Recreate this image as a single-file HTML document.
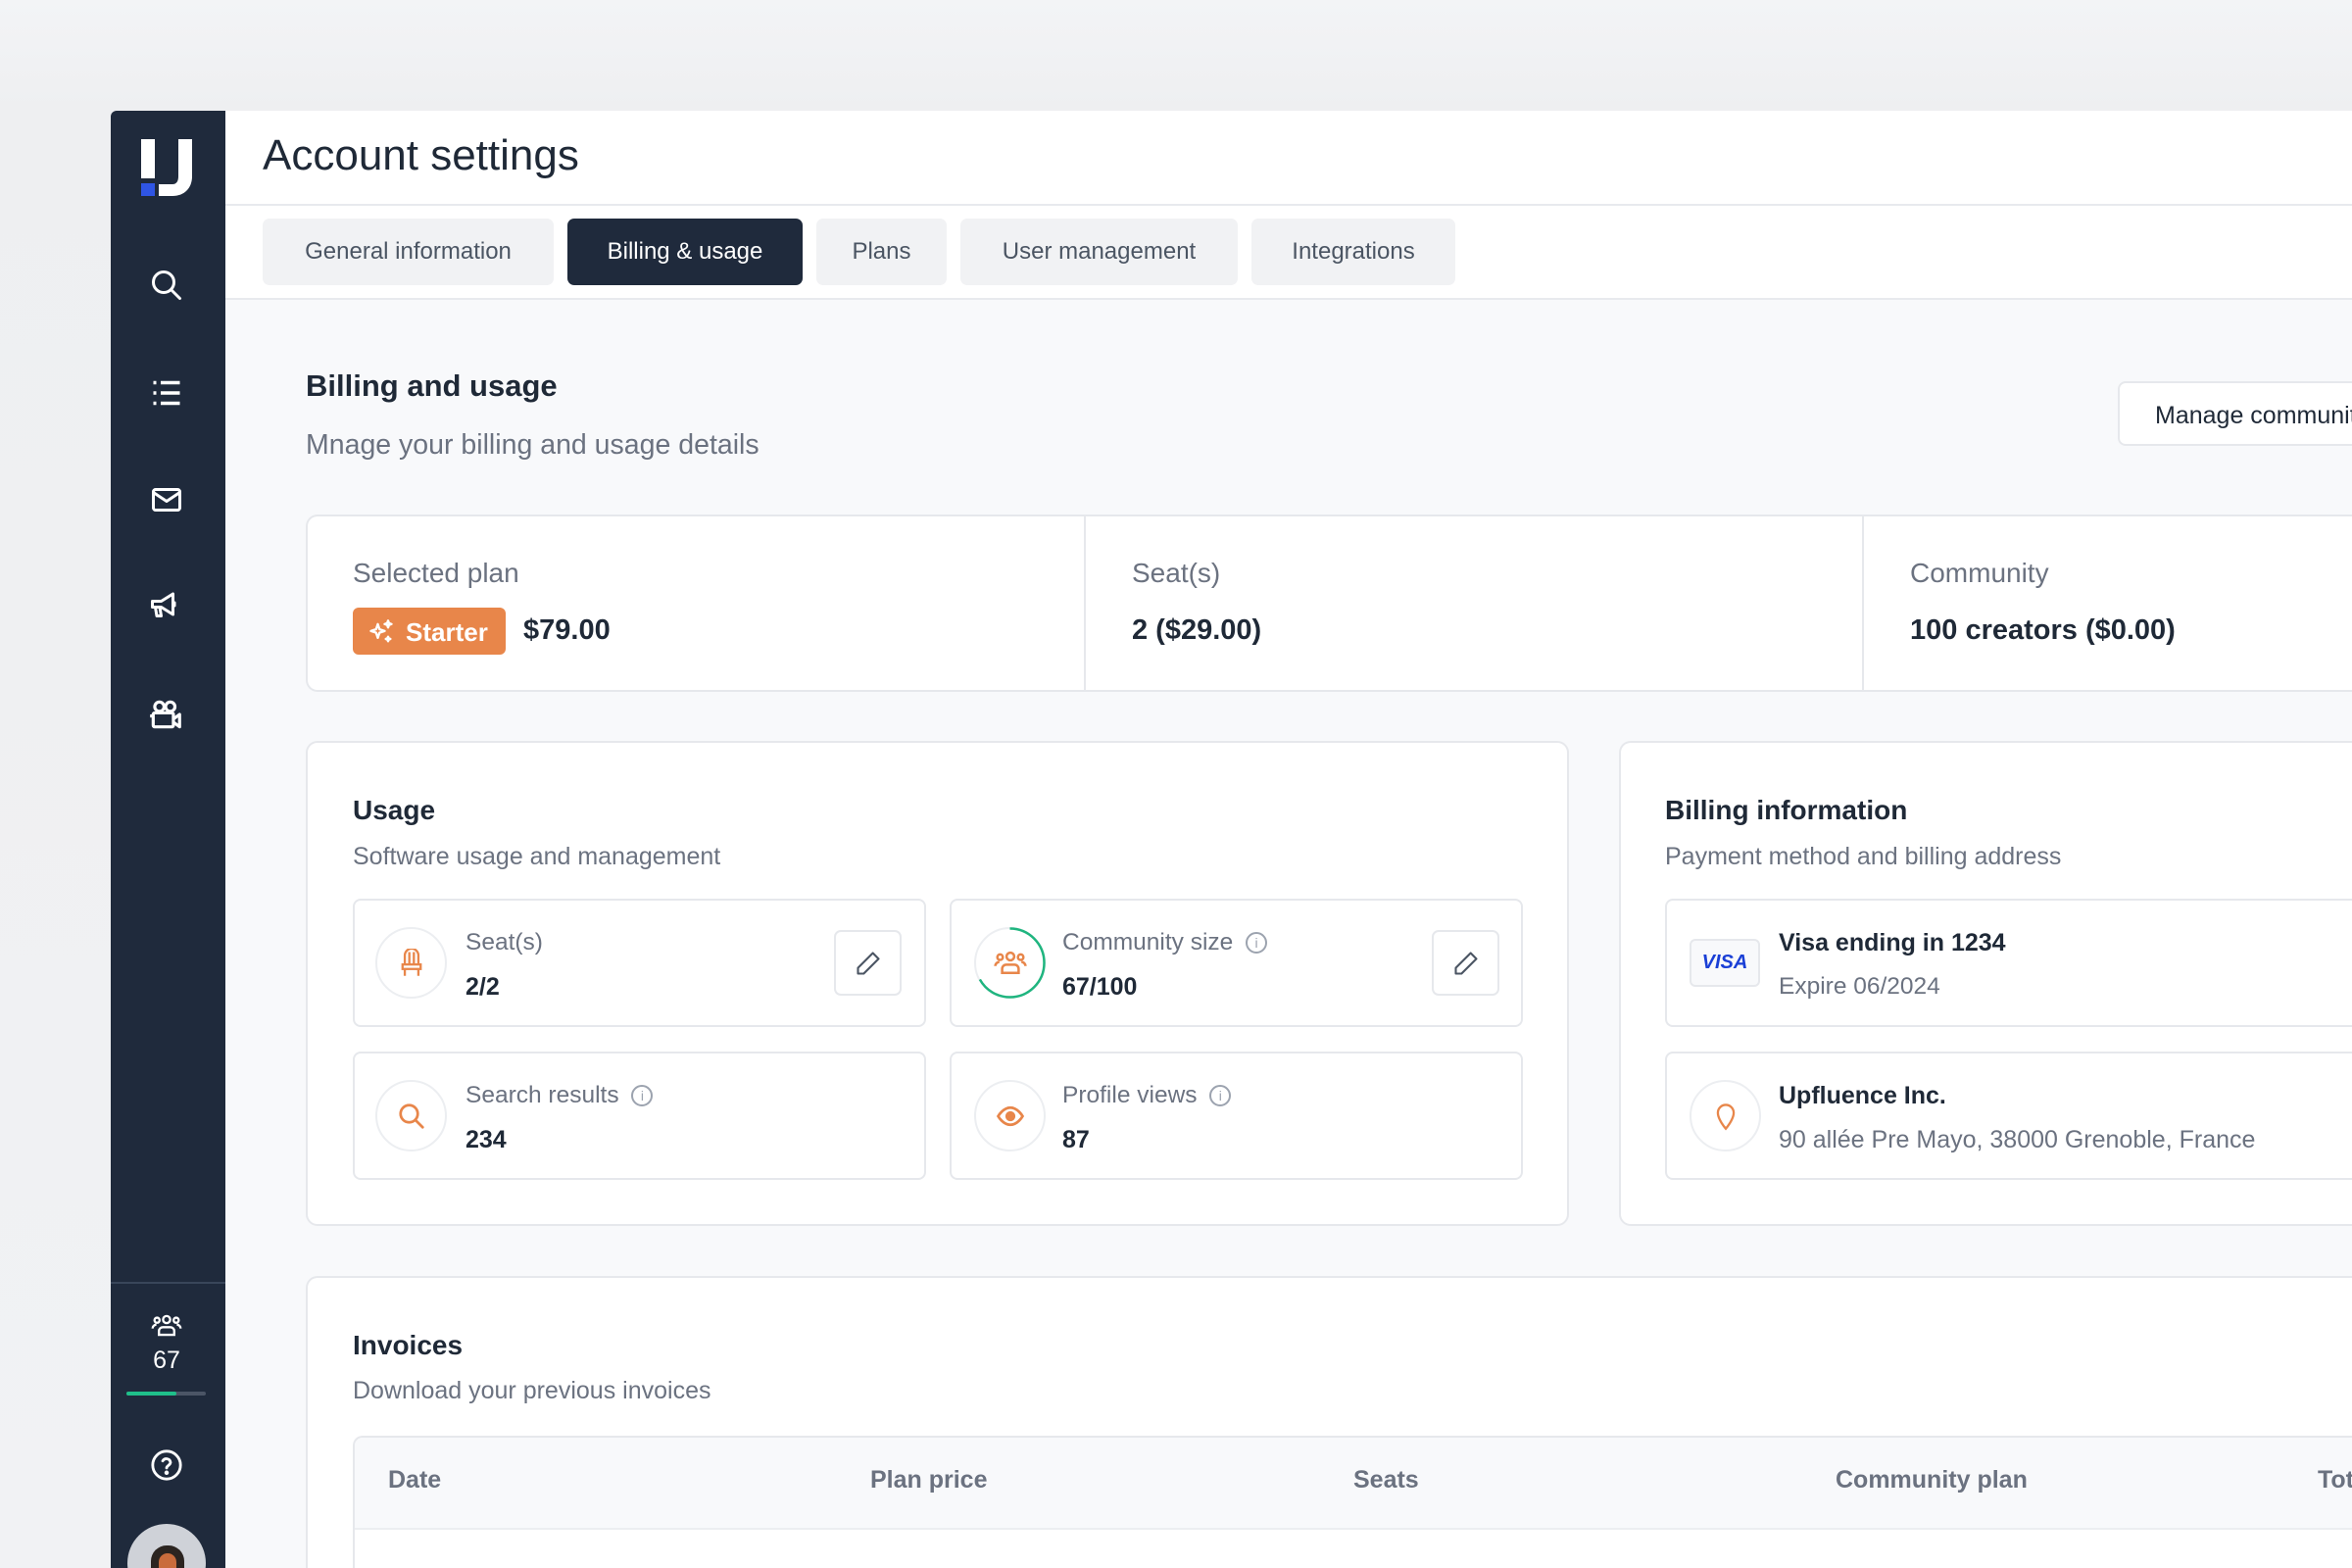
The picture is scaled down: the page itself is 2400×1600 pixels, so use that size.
<!DOCTYPE html>
<html><head><meta charset="utf-8">
<style>
*{box-sizing:border-box;margin:0;padding:0}
html{width:2400px;height:1600px;overflow:hidden}
body{width:2400px;height:1600px;overflow:hidden;background:linear-gradient(#f3f4f6,#eeeff1 110px,#f1f2f4);font-family:"Liberation Sans",sans-serif;position:relative;color:#1f2937}
.a{position:absolute}
.side{left:113px;top:113px;width:117px;height:1487px;background:#1f2a3c;border-top-left-radius:6px}
.main{left:230px;top:113px;width:2170px;height:1487px;background:#f8f9fb}
.hdr{left:230px;top:113px;width:2170px;height:97px;background:#fff;border-bottom:2px solid #e8eaee}
.tabs{left:230px;top:210px;width:2170px;height:96px;background:#fff;border-bottom:2px solid #e8eaee}
.tab{position:absolute;top:223px;height:68px;border-radius:7px;background:#f1f2f4;color:#4b5563;font-size:24px;display:flex;align-items:center;justify-content:center}
.card{position:absolute;background:#fff;border:2px solid #e6e8ec;border-radius:12px}
.rc{border-right:none;border-top-right-radius:0;border-bottom-right-radius:0}
.lbl{position:absolute;color:#6b7280;font-size:28px}
.val{position:absolute;color:#1f2937;font-size:29px;font-weight:bold}
.ic{position:absolute;width:73px;height:73px;border:2px solid #eceef1;border-radius:50%;display:flex;align-items:center;justify-content:center}
.sm{position:absolute;font-size:24.5px;color:#6b7280;white-space:nowrap}
.smv{position:absolute;font-size:25px;color:#1f2937;font-weight:bold;white-space:nowrap}
.edit{position:absolute;width:69px;height:67px;border:2px solid #e6e8ec;border-radius:7px;display:flex;align-items:center;justify-content:center}
.th{position:absolute;top:1496px;font-size:25px;color:#6b7280;font-weight:bold}
.clip{position:absolute;left:0;top:0;width:2400px;height:1600px;overflow:hidden}
</style></head><body><div class="clip">
<div class="a main"></div>
<div class="a hdr"></div>
<div class="a tabs"></div>
<div class="a side"></div>

<div class="a" style="left:144px;top:142px;width:14px;height:40px;background:#fff"></div>
<div class="a" style="left:144px;top:187px;width:14px;height:13px;background:#2f55e4"></div>
<svg class="a" style="left:160px;top:142px" width="38" height="60" viewBox="0 0 38 60"><path d="M22 0h14v38c0 12-8 20-20 20H2v-12h14c4 0 6-3 6-8z" fill="#fff"/></svg>

<svg class="a" style="left:152px;top:273px" width="36" height="36" viewBox="0 0 24 24" fill="none" stroke="#fff" stroke-width="2" stroke-linecap="round"><circle cx="10" cy="10" r="7"/><path d="M15.5 15.5L21 21"/></svg>
<svg class="a" style="left:152px;top:383px" width="36" height="36" viewBox="0 0 24 24" fill="none" stroke="#fff" stroke-width="2.4"><path d="M3 5h2M3 12h2M3 19h2M8 5h13M8 12h13M8 19h13"/></svg>
<svg class="a" style="left:152px;top:492px" width="36" height="36" viewBox="0 0 24 24" fill="none" stroke="#fff" stroke-width="2" stroke-linejoin="round"><rect x="3" y="5" width="18" height="14" rx="1.5"/><path d="M3 7l9 6 9-6"/></svg>
<svg class="a" style="left:150px;top:600px" width="38" height="36" viewBox="0 0 24 24" fill="none" stroke="#fff" stroke-width="2" stroke-linejoin="round"><path d="M3 9h6l8-5v14l-8-5H3z"/><path d="M5 13l1 6h3l-1-6"/><path d="M17 10h1v2h-1"/></svg>
<svg class="a" style="left:150px;top:710px" width="38" height="38" viewBox="0 0 24 24" fill="none" stroke="#fff" stroke-width="2" stroke-linejoin="round"><circle cx="8" cy="7" r="3"/><circle cx="15" cy="7" r="3"/><rect x="4" y="11" width="13" height="9" rx="1"/><path d="M17 15l4-3v8l-4-3"/><path d="M2 13h2"/></svg>
<div class="a" style="left:113px;top:1308px;width:117px;height:2px;background:#39465a"></div>
<svg class="a" style="left:154px;top:1340px" width="32" height="26" viewBox="0 0 24 20" fill="none" stroke="#fff" stroke-width="1.8"><circle cx="12" cy="5" r="2.8"/><circle cx="4.5" cy="5.5" r="2"/><circle cx="19.5" cy="5.5" r="2"/><path d="M6 17v-3a3 3 0 013-3h6a3 3 0 013 3v3z"/><path d="M1 12a3 3 0 013-3M23 12a3 3 0 00-3-3"/></svg>
<div class="a" style="left:130px;top:1374px;width:80px;text-align:center;color:#fff;font-size:25px">67</div>
<div class="a" style="left:129px;top:1420px;width:81px;height:4px;border-radius:2px;background:#4b5566"></div>
<div class="a" style="left:129px;top:1420px;width:51px;height:4px;border-radius:2px;background:#1fbf8a"></div>
<svg class="a" style="left:153px;top:1478px" width="34" height="34" viewBox="0 0 24 24" fill="none" stroke="#fff" stroke-width="2" stroke-linecap="round"><circle cx="12" cy="12" r="10"/><path d="M9.2 9a3 3 0 015.6 1c0 2-2.8 2.5-2.8 4"/><circle cx="12" cy="17.5" r="0.6" fill="#fff"/></svg>
<div class="a" style="left:130px;top:1555px;width:80px;height:45px;overflow:hidden"><div style="position:absolute;left:0;top:0;width:80px;height:80px;border-radius:50%;background:#cfd2d8;overflow:hidden"><div style="position:absolute;left:24px;top:22px;width:34px;height:50px;border-radius:16px;background:#2b2420"></div><div style="position:absolute;left:32px;top:30px;width:18px;height:26px;border-radius:9px;background:#c96c3c"></div></div></div>

<div class="a" style="left:268px;top:134px;font-size:44px;color:#1f2937">Account settings</div>
<div class="tab" style="left:268px;width:297px">General information</div>
<div class="tab" style="left:579px;width:240px;background:#1f2a3c;color:#fff">Billing &amp; usage</div>
<div class="tab" style="left:833px;width:133px">Plans</div>
<div class="tab" style="left:980px;width:283px">User management</div>
<div class="tab" style="left:1277px;width:208px">Integrations</div>

<div class="a" style="left:312px;top:376px;font-size:31px;font-weight:bold;color:#1f2937">Billing and usage</div>
<div class="a" style="left:312px;top:438px;font-size:28.5px;color:#6b7280">Mnage your billing and usage details</div>
<div class="a" style="left:2161px;top:389px;width:239px;height:66px;background:#fff;border:2px solid #e6e8ec;border-right:none;border-radius:8px 0 0 8px;padding:19px 0 0 36px;font-size:25px;color:#1f2937;white-space:nowrap;overflow:hidden">Manage communities</div>

<div class="card rc" style="left:312px;top:525px;width:2088px;height:181px"></div>
<div class="a" style="left:1106px;top:527px;width:2px;height:177px;background:#e6e8ec"></div>
<div class="a" style="left:1900px;top:527px;width:2px;height:177px;background:#e6e8ec"></div>
<div class="lbl" style="left:360px;top:569px">Selected plan</div>
<div class="a" style="left:360px;top:620px;width:156px;height:48px;border-radius:6px;background:#e8864a;color:#fff;font-size:26px;font-weight:bold;padding:10px 0 0 54px">Starter</div>
<svg class="a" style="left:375px;top:631px" width="28" height="28" viewBox="0 0 24 24" fill="none" stroke="#fff" stroke-width="2" stroke-linejoin="round"><path d="M9 5l1.5 4.5L15 11l-4.5 1.5L9 17l-1.5-4.5L3 11l4.5-1.5z"/><path d="M18 2l.8 2.2L21 5l-2.2.8L18 8l-.8-2.2L15 5l2.2-.8zM18 16l.6 1.4L20 18l-1.4.6L18 20l-.6-1.4L16 18l1.4-.6z"/></svg>
<div class="val" style="left:534px;top:627px">$79.00</div>
<div class="lbl" style="left:1155px;top:569px">Seat(s)</div>
<div class="val" style="left:1155px;top:627px">2 ($29.00)</div>
<div class="lbl" style="left:1949px;top:569px">Community</div>
<div class="val" style="left:1949px;top:627px">100 creators ($0.00)</div>

<div class="card" style="left:312px;top:756px;width:1289px;height:495px"></div>
<div class="a" style="left:360px;top:811px;font-size:28px;font-weight:bold">Usage</div>
<div class="a" style="left:360px;top:860px;font-size:25px;color:#6b7280">Software usage and management</div>

<div class="card" style="left:360px;top:917px;width:585px;height:131px;border-radius:8px"></div>
<div class="card" style="left:969px;top:917px;width:585px;height:131px;border-radius:8px"></div>
<div class="card" style="left:360px;top:1073px;width:585px;height:131px;border-radius:8px"></div>
<div class="card" style="left:969px;top:1073px;width:585px;height:131px;border-radius:8px"></div>

<div class="ic" style="left:383px;top:946px"><svg width="28" height="30" viewBox="0 0 24 26" fill="none" stroke="#e8864a" stroke-width="2"><path d="M6 14V6a6 6 0 0112 0v8"/><path d="M10 3v11M14 3v11"/><rect x="4" y="14" width="16" height="4"/><path d="M6 18v6M18 18v6"/></svg></div>
<div class="sm" style="left:475px;top:948px">Seat(s)</div>
<div class="smv" style="left:475px;top:993px">2/2</div>
<div class="edit" style="left:851px;top:949px"><svg width="28" height="28" viewBox="0 0 24 24" fill="none" stroke="#4b5563" stroke-width="1.8" stroke-linejoin="round"><path d="M16 3l5 5L8 21H3v-5z"/></svg></div>

<div class="ic" style="left:994px;top:946px"><svg width="34" height="28" viewBox="0 0 24 20" fill="none" stroke="#e8864a" stroke-width="1.8"><circle cx="12" cy="5" r="2.8"/><circle cx="4.5" cy="5.5" r="2"/><circle cx="19.5" cy="5.5" r="2"/><path d="M6 17v-3a3 3 0 013-3h6a3 3 0 013 3v3z"/><path d="M1 12a3 3 0 013-3M23 12a3 3 0 00-3-3"/></svg></div>
<svg class="a" style="left:994px;top:946px" width="73" height="73" viewBox="0 0 73 73"><circle cx="36.5" cy="36.5" r="35" fill="none" stroke="#1fb57f" stroke-width="2.5" stroke-dasharray="147 300" transform="rotate(-90 36.5 36.5)"/></svg>
<div class="sm" style="left:1084px;top:948px">Community size <span style="display:inline-block;width:22px;height:22px;border:2px solid #9ca3af;border-radius:50%;font-size:14px;text-align:center;line-height:18px;color:#9ca3af;vertical-align:2px;margin-left:6px">i</span></div>
<div class="smv" style="left:1084px;top:993px">67/100</div>
<div class="edit" style="left:1461px;top:949px"><svg width="28" height="28" viewBox="0 0 24 24" fill="none" stroke="#4b5563" stroke-width="1.8" stroke-linejoin="round"><path d="M16 3l5 5L8 21H3v-5z"/></svg></div>

<div class="ic" style="left:383px;top:1102px"><svg width="30" height="30" viewBox="0 0 24 24" fill="none" stroke="#e8864a" stroke-width="2.2" stroke-linecap="round"><circle cx="10" cy="10" r="7"/><path d="M15.5 15.5L21 21"/></svg></div>
<div class="sm" style="left:475px;top:1104px">Search results <span style="display:inline-block;width:22px;height:22px;border:2px solid #9ca3af;border-radius:50%;font-size:14px;text-align:center;line-height:18px;color:#9ca3af;vertical-align:2px;margin-left:6px">i</span></div>
<div class="smv" style="left:475px;top:1149px">234</div>

<div class="ic" style="left:994px;top:1102px"><svg width="30" height="30" viewBox="0 0 24 24" fill="none" stroke="#e8864a" stroke-width="2.2"><path d="M2 12s4-7 10-7 10 7 10 7-4 7-10 7S2 12 2 12z"/><circle cx="12" cy="12" r="3" fill="#e8864a"/></svg></div>
<div class="sm" style="left:1084px;top:1104px">Profile views <span style="display:inline-block;width:22px;height:22px;border:2px solid #9ca3af;border-radius:50%;font-size:14px;text-align:center;line-height:18px;color:#9ca3af;vertical-align:2px;margin-left:6px">i</span></div>
<div class="smv" style="left:1084px;top:1149px">87</div>

<div class="card rc" style="left:1652px;top:756px;width:748px;height:495px"></div>
<div class="a" style="left:1699px;top:811px;font-size:28px;font-weight:bold">Billing information</div>
<div class="a" style="left:1699px;top:860px;font-size:25px;color:#6b7280">Payment method and billing address</div>
<div class="card rc" style="left:1699px;top:917px;width:701px;height:131px;border-radius:8px 0 0 8px"></div>
<div class="card rc" style="left:1699px;top:1073px;width:701px;height:131px;border-radius:8px 0 0 8px"></div>
<div class="a" style="left:1724px;top:958px;width:72px;height:49px;border:2px solid #e6e8ec;border-radius:6px;background:#f8f9fb;color:#1a3fd6;font-weight:bold;font-style:italic;font-size:20px;text-align:center;line-height:45px">VISA</div>
<div class="smv" style="left:1815px;top:948px">Visa ending in 1234</div>
<div class="sm" style="left:1815px;top:993px">Expire 06/2024</div>
<div class="ic" style="left:1724px;top:1102px"><svg width="24" height="30" viewBox="0 0 20 26" fill="none" stroke="#e8864a" stroke-width="2"><path d="M10 24s-7-8-7-14a7 7 0 0114 0c0 6-7 14-7 14z"/></svg></div>
<div class="smv" style="left:1815px;top:1104px">Upfluence Inc.</div>
<div class="sm" style="left:1815px;top:1149px;font-size:25px">90 allée Pre Mayo, 38000 Grenoble, France</div>

<div class="a" style="left:312px;top:1302px;width:2088px;height:298px;background:#fff;border:2px solid #e6e8ec;border-right:none;border-bottom:none;border-top-left-radius:12px"></div>
<div class="a" style="left:360px;top:1357px;font-size:28px;font-weight:bold">Invoices</div>
<div class="a" style="left:360px;top:1405px;font-size:25px;color:#6b7280">Download your previous invoices</div>
<div class="a" style="left:360px;top:1465px;width:2040px;height:135px;border:2px solid #e6e8ec;border-right:none;border-bottom:none;border-top-left-radius:10px;background:#fff;overflow:hidden"><div style="height:94px;background:#f8f9fb;border-bottom:2px solid #eceef1"></div></div>
<div class="th" style="left:396px">Date</div>
<div class="th" style="left:888px">Plan price</div>
<div class="th" style="left:1381px">Seats</div>
<div class="th" style="left:1873px">Community plan</div>
<div class="th" style="left:2365px;width:35px;overflow:hidden;white-space:nowrap">Tot</div>
</div></body></html>
